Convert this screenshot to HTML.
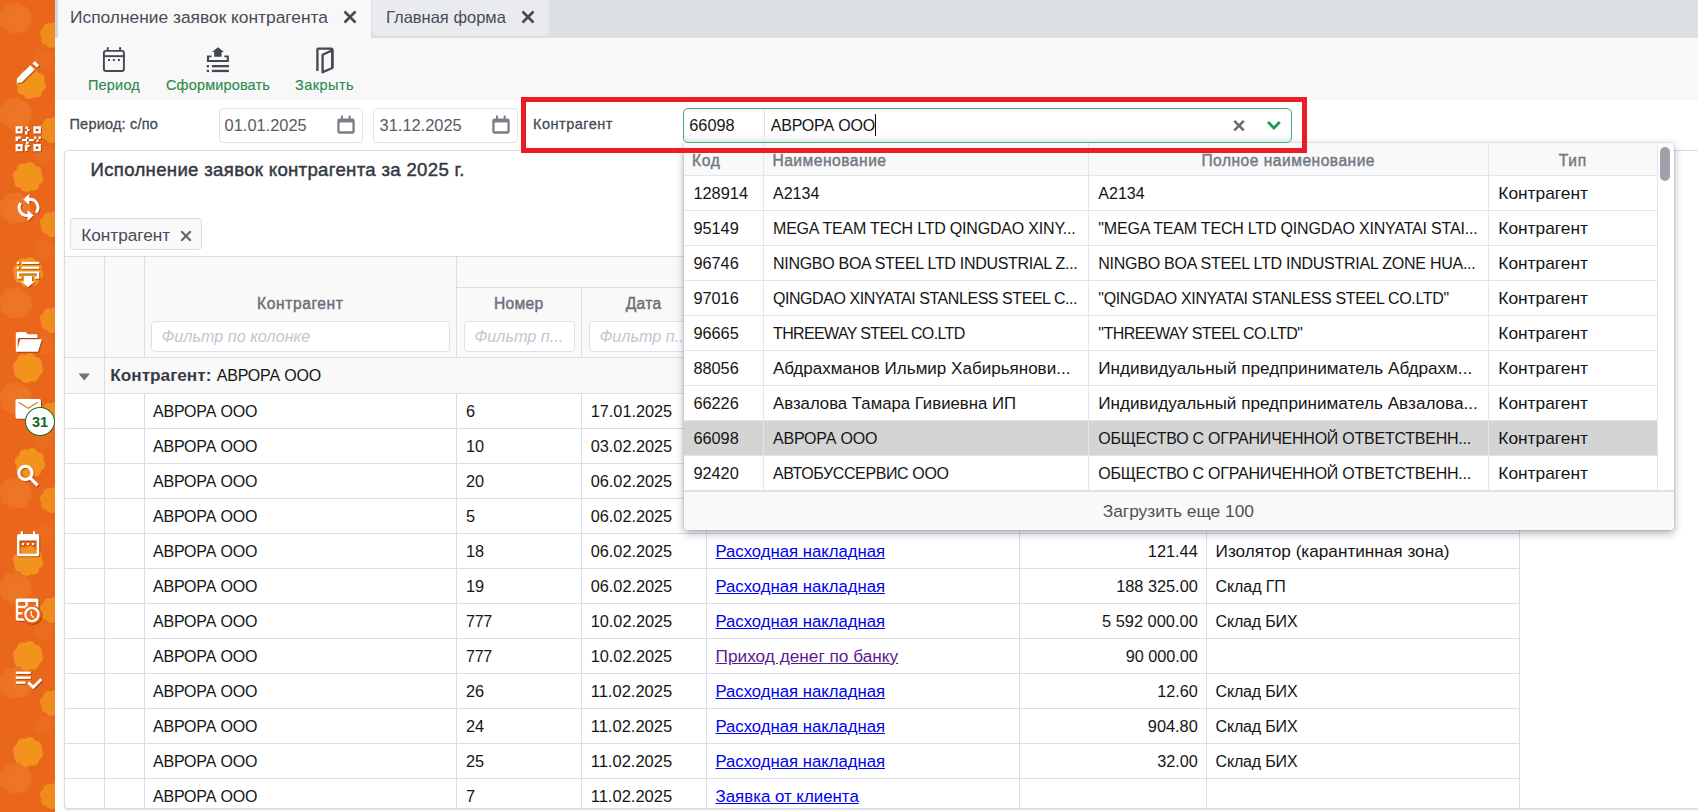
<!DOCTYPE html>
<html><head><meta charset="utf-8">
<style>
*{box-sizing:border-box;margin:0;padding:0}
html,body{width:1698px;height:812px;overflow:hidden;background:#fff;font-family:"Liberation Sans",sans-serif;color:#1b1b1b}
.r{position:absolute}
.t{position:absolute;white-space:nowrap}
.ic{position:absolute;overflow:visible}
a{color:inherit}
</style></head><body>

<svg class="ic" style="left:0;top:0;overflow:hidden" width="55" height="812" viewBox="0 0 55 812"><rect width="55" height="812" fill="#e9661b"/><g fill="#ee7728" opacity="0.75"><circle cx="24.7" cy="-75.0" r="6.4"/><circle cx="20.5" cy="-68.7" r="6.4"/><circle cx="13.0" cy="-67.3" r="6.4"/><circle cx="6.7" cy="-71.5" r="6.4"/><circle cx="5.3" cy="-79.0" r="6.4"/><circle cx="9.5" cy="-85.3" r="6.4"/><circle cx="17.0" cy="-86.7" r="6.4"/><circle cx="23.3" cy="-82.5" r="6.4"/><circle cx="15" cy="-77" r="9.9"/></g><g fill="#ee7526" opacity="0.6"><circle cx="27.9" cy="21.6" r="5.2"/><circle cx="24.5" cy="26.7" r="5.2"/><circle cx="18.4" cy="27.9" r="5.2"/><circle cx="13.3" cy="24.5" r="5.2"/><circle cx="12.1" cy="18.4" r="5.2"/><circle cx="15.5" cy="13.3" r="5.2"/><circle cx="21.6" cy="12.1" r="5.2"/><circle cx="26.7" cy="15.5" r="5.2"/><circle cx="20" cy="20" r="8.1"/></g><g fill="#ed7022" opacity="0.6"><circle cx="50.1" cy="61.2" r="4.0"/><circle cx="47.4" cy="65.2" r="4.0"/><circle cx="42.8" cy="66.1" r="4.0"/><circle cx="38.8" cy="63.4" r="4.0"/><circle cx="37.9" cy="58.8" r="4.0"/><circle cx="40.6" cy="54.8" r="4.0"/><circle cx="45.2" cy="53.9" r="4.0"/><circle cx="49.2" cy="56.6" r="4.0"/><circle cx="44" cy="60" r="6.2"/></g><g fill="#ee7728" opacity="0.75"><circle cx="24.7" cy="20.0" r="6.4"/><circle cx="20.5" cy="26.3" r="6.4"/><circle cx="13.0" cy="27.7" r="6.4"/><circle cx="6.7" cy="23.5" r="6.4"/><circle cx="5.3" cy="16.0" r="6.4"/><circle cx="9.5" cy="9.7" r="6.4"/><circle cx="17.0" cy="8.3" r="6.4"/><circle cx="23.3" cy="12.5" r="6.4"/><circle cx="15" cy="18" r="9.9"/></g><g fill="#ee7526" opacity="0.6"><circle cx="27.9" cy="116.6" r="5.2"/><circle cx="24.5" cy="121.7" r="5.2"/><circle cx="18.4" cy="122.9" r="5.2"/><circle cx="13.3" cy="119.5" r="5.2"/><circle cx="12.1" cy="113.4" r="5.2"/><circle cx="15.5" cy="108.3" r="5.2"/><circle cx="21.6" cy="107.1" r="5.2"/><circle cx="26.7" cy="110.5" r="5.2"/><circle cx="20" cy="115" r="8.1"/></g><g fill="#ed7022" opacity="0.6"><circle cx="50.1" cy="156.2" r="4.0"/><circle cx="47.4" cy="160.2" r="4.0"/><circle cx="42.8" cy="161.1" r="4.0"/><circle cx="38.8" cy="158.4" r="4.0"/><circle cx="37.9" cy="153.8" r="4.0"/><circle cx="40.6" cy="149.8" r="4.0"/><circle cx="45.2" cy="148.9" r="4.0"/><circle cx="49.2" cy="151.6" r="4.0"/><circle cx="44" cy="155" r="6.2"/></g><g fill="#ee7728" opacity="0.75"><circle cx="24.7" cy="115.0" r="6.4"/><circle cx="20.5" cy="121.3" r="6.4"/><circle cx="13.0" cy="122.7" r="6.4"/><circle cx="6.7" cy="118.5" r="6.4"/><circle cx="5.3" cy="111.0" r="6.4"/><circle cx="9.5" cy="104.7" r="6.4"/><circle cx="17.0" cy="103.3" r="6.4"/><circle cx="23.3" cy="107.5" r="6.4"/><circle cx="15" cy="113" r="9.9"/></g><g fill="#ee7526" opacity="0.6"><circle cx="27.9" cy="211.6" r="5.2"/><circle cx="24.5" cy="216.7" r="5.2"/><circle cx="18.4" cy="217.9" r="5.2"/><circle cx="13.3" cy="214.5" r="5.2"/><circle cx="12.1" cy="208.4" r="5.2"/><circle cx="15.5" cy="203.3" r="5.2"/><circle cx="21.6" cy="202.1" r="5.2"/><circle cx="26.7" cy="205.5" r="5.2"/><circle cx="20" cy="210" r="8.1"/></g><g fill="#ed7022" opacity="0.6"><circle cx="50.1" cy="251.2" r="4.0"/><circle cx="47.4" cy="255.2" r="4.0"/><circle cx="42.8" cy="256.1" r="4.0"/><circle cx="38.8" cy="253.4" r="4.0"/><circle cx="37.9" cy="248.8" r="4.0"/><circle cx="40.6" cy="244.8" r="4.0"/><circle cx="45.2" cy="243.9" r="4.0"/><circle cx="49.2" cy="246.6" r="4.0"/><circle cx="44" cy="250" r="6.2"/></g><g fill="#ee7728" opacity="0.75"><circle cx="24.7" cy="210.0" r="6.4"/><circle cx="20.5" cy="216.3" r="6.4"/><circle cx="13.0" cy="217.7" r="6.4"/><circle cx="6.7" cy="213.5" r="6.4"/><circle cx="5.3" cy="206.0" r="6.4"/><circle cx="9.5" cy="199.7" r="6.4"/><circle cx="17.0" cy="198.3" r="6.4"/><circle cx="23.3" cy="202.5" r="6.4"/><circle cx="15" cy="208" r="9.9"/></g><g fill="#ee7526" opacity="0.6"><circle cx="27.9" cy="306.6" r="5.2"/><circle cx="24.5" cy="311.7" r="5.2"/><circle cx="18.4" cy="312.9" r="5.2"/><circle cx="13.3" cy="309.5" r="5.2"/><circle cx="12.1" cy="303.4" r="5.2"/><circle cx="15.5" cy="298.3" r="5.2"/><circle cx="21.6" cy="297.1" r="5.2"/><circle cx="26.7" cy="300.5" r="5.2"/><circle cx="20" cy="305" r="8.1"/></g><g fill="#ed7022" opacity="0.6"><circle cx="50.1" cy="346.2" r="4.0"/><circle cx="47.4" cy="350.2" r="4.0"/><circle cx="42.8" cy="351.1" r="4.0"/><circle cx="38.8" cy="348.4" r="4.0"/><circle cx="37.9" cy="343.8" r="4.0"/><circle cx="40.6" cy="339.8" r="4.0"/><circle cx="45.2" cy="338.9" r="4.0"/><circle cx="49.2" cy="341.6" r="4.0"/><circle cx="44" cy="345" r="6.2"/></g><g fill="#ee7728" opacity="0.75"><circle cx="24.7" cy="305.0" r="6.4"/><circle cx="20.5" cy="311.3" r="6.4"/><circle cx="13.0" cy="312.7" r="6.4"/><circle cx="6.7" cy="308.5" r="6.4"/><circle cx="5.3" cy="301.0" r="6.4"/><circle cx="9.5" cy="294.7" r="6.4"/><circle cx="17.0" cy="293.3" r="6.4"/><circle cx="23.3" cy="297.5" r="6.4"/><circle cx="15" cy="303" r="9.9"/></g><g fill="#ee7526" opacity="0.6"><circle cx="27.9" cy="401.6" r="5.2"/><circle cx="24.5" cy="406.7" r="5.2"/><circle cx="18.4" cy="407.9" r="5.2"/><circle cx="13.3" cy="404.5" r="5.2"/><circle cx="12.1" cy="398.4" r="5.2"/><circle cx="15.5" cy="393.3" r="5.2"/><circle cx="21.6" cy="392.1" r="5.2"/><circle cx="26.7" cy="395.5" r="5.2"/><circle cx="20" cy="400" r="8.1"/></g><g fill="#ed7022" opacity="0.6"><circle cx="50.1" cy="441.2" r="4.0"/><circle cx="47.4" cy="445.2" r="4.0"/><circle cx="42.8" cy="446.1" r="4.0"/><circle cx="38.8" cy="443.4" r="4.0"/><circle cx="37.9" cy="438.8" r="4.0"/><circle cx="40.6" cy="434.8" r="4.0"/><circle cx="45.2" cy="433.9" r="4.0"/><circle cx="49.2" cy="436.6" r="4.0"/><circle cx="44" cy="440" r="6.2"/></g><g fill="#ee7728" opacity="0.75"><circle cx="24.7" cy="400.0" r="6.4"/><circle cx="20.5" cy="406.3" r="6.4"/><circle cx="13.0" cy="407.7" r="6.4"/><circle cx="6.7" cy="403.5" r="6.4"/><circle cx="5.3" cy="396.0" r="6.4"/><circle cx="9.5" cy="389.7" r="6.4"/><circle cx="17.0" cy="388.3" r="6.4"/><circle cx="23.3" cy="392.5" r="6.4"/><circle cx="15" cy="398" r="9.9"/></g><g fill="#ee7526" opacity="0.6"><circle cx="27.9" cy="496.6" r="5.2"/><circle cx="24.5" cy="501.7" r="5.2"/><circle cx="18.4" cy="502.9" r="5.2"/><circle cx="13.3" cy="499.5" r="5.2"/><circle cx="12.1" cy="493.4" r="5.2"/><circle cx="15.5" cy="488.3" r="5.2"/><circle cx="21.6" cy="487.1" r="5.2"/><circle cx="26.7" cy="490.5" r="5.2"/><circle cx="20" cy="495" r="8.1"/></g><g fill="#ed7022" opacity="0.6"><circle cx="50.1" cy="536.2" r="4.0"/><circle cx="47.4" cy="540.2" r="4.0"/><circle cx="42.8" cy="541.1" r="4.0"/><circle cx="38.8" cy="538.4" r="4.0"/><circle cx="37.9" cy="533.8" r="4.0"/><circle cx="40.6" cy="529.8" r="4.0"/><circle cx="45.2" cy="528.9" r="4.0"/><circle cx="49.2" cy="531.6" r="4.0"/><circle cx="44" cy="535" r="6.2"/></g><g fill="#ee7728" opacity="0.75"><circle cx="24.7" cy="495.0" r="6.4"/><circle cx="20.5" cy="501.3" r="6.4"/><circle cx="13.0" cy="502.7" r="6.4"/><circle cx="6.7" cy="498.5" r="6.4"/><circle cx="5.3" cy="491.0" r="6.4"/><circle cx="9.5" cy="484.7" r="6.4"/><circle cx="17.0" cy="483.3" r="6.4"/><circle cx="23.3" cy="487.5" r="6.4"/><circle cx="15" cy="493" r="9.9"/></g><g fill="#ee7526" opacity="0.6"><circle cx="27.9" cy="591.6" r="5.2"/><circle cx="24.5" cy="596.7" r="5.2"/><circle cx="18.4" cy="597.9" r="5.2"/><circle cx="13.3" cy="594.5" r="5.2"/><circle cx="12.1" cy="588.4" r="5.2"/><circle cx="15.5" cy="583.3" r="5.2"/><circle cx="21.6" cy="582.1" r="5.2"/><circle cx="26.7" cy="585.5" r="5.2"/><circle cx="20" cy="590" r="8.1"/></g><g fill="#ed7022" opacity="0.6"><circle cx="50.1" cy="631.2" r="4.0"/><circle cx="47.4" cy="635.2" r="4.0"/><circle cx="42.8" cy="636.1" r="4.0"/><circle cx="38.8" cy="633.4" r="4.0"/><circle cx="37.9" cy="628.8" r="4.0"/><circle cx="40.6" cy="624.8" r="4.0"/><circle cx="45.2" cy="623.9" r="4.0"/><circle cx="49.2" cy="626.6" r="4.0"/><circle cx="44" cy="630" r="6.2"/></g><g fill="#ee7728" opacity="0.75"><circle cx="24.7" cy="590.0" r="6.4"/><circle cx="20.5" cy="596.3" r="6.4"/><circle cx="13.0" cy="597.7" r="6.4"/><circle cx="6.7" cy="593.5" r="6.4"/><circle cx="5.3" cy="586.0" r="6.4"/><circle cx="9.5" cy="579.7" r="6.4"/><circle cx="17.0" cy="578.3" r="6.4"/><circle cx="23.3" cy="582.5" r="6.4"/><circle cx="15" cy="588" r="9.9"/></g><g fill="#ee7526" opacity="0.6"><circle cx="27.9" cy="686.6" r="5.2"/><circle cx="24.5" cy="691.7" r="5.2"/><circle cx="18.4" cy="692.9" r="5.2"/><circle cx="13.3" cy="689.5" r="5.2"/><circle cx="12.1" cy="683.4" r="5.2"/><circle cx="15.5" cy="678.3" r="5.2"/><circle cx="21.6" cy="677.1" r="5.2"/><circle cx="26.7" cy="680.5" r="5.2"/><circle cx="20" cy="685" r="8.1"/></g><g fill="#ed7022" opacity="0.6"><circle cx="50.1" cy="726.2" r="4.0"/><circle cx="47.4" cy="730.2" r="4.0"/><circle cx="42.8" cy="731.1" r="4.0"/><circle cx="38.8" cy="728.4" r="4.0"/><circle cx="37.9" cy="723.8" r="4.0"/><circle cx="40.6" cy="719.8" r="4.0"/><circle cx="45.2" cy="718.9" r="4.0"/><circle cx="49.2" cy="721.6" r="4.0"/><circle cx="44" cy="725" r="6.2"/></g><g fill="#ee7728" opacity="0.75"><circle cx="24.7" cy="685.0" r="6.4"/><circle cx="20.5" cy="691.3" r="6.4"/><circle cx="13.0" cy="692.7" r="6.4"/><circle cx="6.7" cy="688.5" r="6.4"/><circle cx="5.3" cy="681.0" r="6.4"/><circle cx="9.5" cy="674.7" r="6.4"/><circle cx="17.0" cy="673.3" r="6.4"/><circle cx="23.3" cy="677.5" r="6.4"/><circle cx="15" cy="683" r="9.9"/></g><g fill="#ee7526" opacity="0.6"><circle cx="27.9" cy="781.6" r="5.2"/><circle cx="24.5" cy="786.7" r="5.2"/><circle cx="18.4" cy="787.9" r="5.2"/><circle cx="13.3" cy="784.5" r="5.2"/><circle cx="12.1" cy="778.4" r="5.2"/><circle cx="15.5" cy="773.3" r="5.2"/><circle cx="21.6" cy="772.1" r="5.2"/><circle cx="26.7" cy="775.5" r="5.2"/><circle cx="20" cy="780" r="8.1"/></g><g fill="#ed7022" opacity="0.6"><circle cx="50.1" cy="821.2" r="4.0"/><circle cx="47.4" cy="825.2" r="4.0"/><circle cx="42.8" cy="826.1" r="4.0"/><circle cx="38.8" cy="823.4" r="4.0"/><circle cx="37.9" cy="818.8" r="4.0"/><circle cx="40.6" cy="814.8" r="4.0"/><circle cx="45.2" cy="813.9" r="4.0"/><circle cx="49.2" cy="816.6" r="4.0"/><circle cx="44" cy="820" r="6.2"/></g><g fill="#ee7728" opacity="0.75"><circle cx="24.7" cy="780.0" r="6.4"/><circle cx="20.5" cy="786.3" r="6.4"/><circle cx="13.0" cy="787.7" r="6.4"/><circle cx="6.7" cy="783.5" r="6.4"/><circle cx="5.3" cy="776.0" r="6.4"/><circle cx="9.5" cy="769.7" r="6.4"/><circle cx="17.0" cy="768.3" r="6.4"/><circle cx="23.3" cy="772.5" r="6.4"/><circle cx="15" cy="778" r="9.9"/></g><g fill="#ee7526" opacity="0.6"><circle cx="27.9" cy="876.6" r="5.2"/><circle cx="24.5" cy="881.7" r="5.2"/><circle cx="18.4" cy="882.9" r="5.2"/><circle cx="13.3" cy="879.5" r="5.2"/><circle cx="12.1" cy="873.4" r="5.2"/><circle cx="15.5" cy="868.3" r="5.2"/><circle cx="21.6" cy="867.1" r="5.2"/><circle cx="26.7" cy="870.5" r="5.2"/><circle cx="20" cy="875" r="8.1"/></g><g fill="#ed7022" opacity="0.6"><circle cx="50.1" cy="916.2" r="4.0"/><circle cx="47.4" cy="920.2" r="4.0"/><circle cx="42.8" cy="921.1" r="4.0"/><circle cx="38.8" cy="918.4" r="4.0"/><circle cx="37.9" cy="913.8" r="4.0"/><circle cx="40.6" cy="909.8" r="4.0"/><circle cx="45.2" cy="908.9" r="4.0"/><circle cx="49.2" cy="911.6" r="4.0"/><circle cx="44" cy="915" r="6.2"/></g><g fill="#ee7728" opacity="0.75"><circle cx="24.7" cy="875.0" r="6.4"/><circle cx="20.5" cy="881.3" r="6.4"/><circle cx="13.0" cy="882.7" r="6.4"/><circle cx="6.7" cy="878.5" r="6.4"/><circle cx="5.3" cy="871.0" r="6.4"/><circle cx="9.5" cy="864.7" r="6.4"/><circle cx="17.0" cy="863.3" r="6.4"/><circle cx="23.3" cy="867.5" r="6.4"/><circle cx="15" cy="873" r="9.9"/></g><g fill="#ee7526" opacity="0.6"><circle cx="27.9" cy="971.6" r="5.2"/><circle cx="24.5" cy="976.7" r="5.2"/><circle cx="18.4" cy="977.9" r="5.2"/><circle cx="13.3" cy="974.5" r="5.2"/><circle cx="12.1" cy="968.4" r="5.2"/><circle cx="15.5" cy="963.3" r="5.2"/><circle cx="21.6" cy="962.1" r="5.2"/><circle cx="26.7" cy="965.5" r="5.2"/><circle cx="20" cy="970" r="8.1"/></g><g fill="#ed7022" opacity="0.6"><circle cx="50.1" cy="1011.2" r="4.0"/><circle cx="47.4" cy="1015.2" r="4.0"/><circle cx="42.8" cy="1016.1" r="4.0"/><circle cx="38.8" cy="1013.4" r="4.0"/><circle cx="37.9" cy="1008.8" r="4.0"/><circle cx="40.6" cy="1004.8" r="4.0"/><circle cx="45.2" cy="1003.9" r="4.0"/><circle cx="49.2" cy="1006.6" r="4.0"/><circle cx="44" cy="1010" r="6.2"/></g><g fill="#f3961f" opacity="0.95"><circle cx="40.1" cy="85.8" r="6.0"/><circle cx="36.1" cy="91.8" r="6.0"/><circle cx="29.2" cy="93.1" r="6.0"/><circle cx="23.2" cy="89.1" r="6.0"/><circle cx="21.9" cy="82.2" r="6.0"/><circle cx="25.9" cy="76.2" r="6.0"/><circle cx="32.8" cy="74.9" r="6.0"/><circle cx="38.8" cy="78.9" r="6.0"/><circle cx="31" cy="84" r="9.3"/></g><g fill="#f3961f" opacity="0.95"><circle cx="37.1" cy="178.8" r="6.0"/><circle cx="33.1" cy="184.8" r="6.0"/><circle cx="26.2" cy="186.1" r="6.0"/><circle cx="20.2" cy="182.1" r="6.0"/><circle cx="18.9" cy="175.2" r="6.0"/><circle cx="22.9" cy="169.2" r="6.0"/><circle cx="29.8" cy="167.9" r="6.0"/><circle cx="35.8" cy="171.9" r="6.0"/><circle cx="28" cy="177" r="9.3"/></g><g fill="#f3961f" opacity="0.95"><circle cx="37.1" cy="273.8" r="6.0"/><circle cx="33.1" cy="279.8" r="6.0"/><circle cx="26.2" cy="281.1" r="6.0"/><circle cx="20.2" cy="277.1" r="6.0"/><circle cx="18.9" cy="270.2" r="6.0"/><circle cx="22.9" cy="264.2" r="6.0"/><circle cx="29.8" cy="262.9" r="6.0"/><circle cx="35.8" cy="266.9" r="6.0"/><circle cx="28" cy="272" r="9.3"/></g><g fill="#f3961f" opacity="0.95"><circle cx="37.1" cy="369.8" r="6.0"/><circle cx="33.1" cy="375.8" r="6.0"/><circle cx="26.2" cy="377.1" r="6.0"/><circle cx="20.2" cy="373.1" r="6.0"/><circle cx="18.9" cy="366.2" r="6.0"/><circle cx="22.9" cy="360.2" r="6.0"/><circle cx="29.8" cy="358.9" r="6.0"/><circle cx="35.8" cy="362.9" r="6.0"/><circle cx="28" cy="368" r="9.3"/></g><g fill="#f3961f" opacity="0.95"><circle cx="39.1" cy="464.8" r="6.0"/><circle cx="35.1" cy="470.8" r="6.0"/><circle cx="28.2" cy="472.1" r="6.0"/><circle cx="22.2" cy="468.1" r="6.0"/><circle cx="20.9" cy="461.2" r="6.0"/><circle cx="24.9" cy="455.2" r="6.0"/><circle cx="31.8" cy="453.9" r="6.0"/><circle cx="37.8" cy="457.9" r="6.0"/><circle cx="30" cy="463" r="9.3"/></g><g fill="#f3961f" opacity="0.95"><circle cx="37.1" cy="562.8" r="6.0"/><circle cx="33.1" cy="568.8" r="6.0"/><circle cx="26.2" cy="570.1" r="6.0"/><circle cx="20.2" cy="566.1" r="6.0"/><circle cx="18.9" cy="559.2" r="6.0"/><circle cx="22.9" cy="553.2" r="6.0"/><circle cx="29.8" cy="551.9" r="6.0"/><circle cx="35.8" cy="555.9" r="6.0"/><circle cx="28" cy="561" r="9.3"/></g><g fill="#f3961f" opacity="0.95"><circle cx="37.1" cy="657.8" r="6.0"/><circle cx="33.1" cy="663.8" r="6.0"/><circle cx="26.2" cy="665.1" r="6.0"/><circle cx="20.2" cy="661.1" r="6.0"/><circle cx="18.9" cy="654.2" r="6.0"/><circle cx="22.9" cy="648.2" r="6.0"/><circle cx="29.8" cy="646.9" r="6.0"/><circle cx="35.8" cy="650.9" r="6.0"/><circle cx="28" cy="656" r="9.3"/></g><g fill="#f3961f" opacity="0.95"><circle cx="37.1" cy="753.8" r="6.0"/><circle cx="33.1" cy="759.8" r="6.0"/><circle cx="26.2" cy="761.1" r="6.0"/><circle cx="20.2" cy="757.1" r="6.0"/><circle cx="18.9" cy="750.2" r="6.0"/><circle cx="22.9" cy="744.2" r="6.0"/><circle cx="29.8" cy="742.9" r="6.0"/><circle cx="35.8" cy="746.9" r="6.0"/><circle cx="28" cy="752" r="9.3"/></g><g fill="#f2901f" opacity="0.9"><circle cx="60.9" cy="36.6" r="5.2"/><circle cx="57.5" cy="41.7" r="5.2"/><circle cx="51.4" cy="42.9" r="5.2"/><circle cx="46.3" cy="39.5" r="5.2"/><circle cx="45.1" cy="33.4" r="5.2"/><circle cx="48.5" cy="28.3" r="5.2"/><circle cx="54.6" cy="27.1" r="5.2"/><circle cx="59.7" cy="30.5" r="5.2"/><circle cx="53" cy="35" r="8.1"/></g><g fill="#f2901f" opacity="0.9"><circle cx="60.9" cy="131.6" r="5.2"/><circle cx="57.5" cy="136.7" r="5.2"/><circle cx="51.4" cy="137.9" r="5.2"/><circle cx="46.3" cy="134.5" r="5.2"/><circle cx="45.1" cy="128.4" r="5.2"/><circle cx="48.5" cy="123.3" r="5.2"/><circle cx="54.6" cy="122.1" r="5.2"/><circle cx="59.7" cy="125.5" r="5.2"/><circle cx="53" cy="130" r="8.1"/></g><g fill="#f2901f" opacity="0.9"><circle cx="60.9" cy="225.6" r="5.2"/><circle cx="57.5" cy="230.7" r="5.2"/><circle cx="51.4" cy="231.9" r="5.2"/><circle cx="46.3" cy="228.5" r="5.2"/><circle cx="45.1" cy="222.4" r="5.2"/><circle cx="48.5" cy="217.3" r="5.2"/><circle cx="54.6" cy="216.1" r="5.2"/><circle cx="59.7" cy="219.5" r="5.2"/><circle cx="53" cy="224" r="8.1"/></g><g fill="#f2901f" opacity="0.9"><circle cx="60.9" cy="321.6" r="5.2"/><circle cx="57.5" cy="326.7" r="5.2"/><circle cx="51.4" cy="327.9" r="5.2"/><circle cx="46.3" cy="324.5" r="5.2"/><circle cx="45.1" cy="318.4" r="5.2"/><circle cx="48.5" cy="313.3" r="5.2"/><circle cx="54.6" cy="312.1" r="5.2"/><circle cx="59.7" cy="315.5" r="5.2"/><circle cx="53" cy="320" r="8.1"/></g><g fill="#f2901f" opacity="0.9"><circle cx="60.9" cy="416.6" r="5.2"/><circle cx="57.5" cy="421.7" r="5.2"/><circle cx="51.4" cy="422.9" r="5.2"/><circle cx="46.3" cy="419.5" r="5.2"/><circle cx="45.1" cy="413.4" r="5.2"/><circle cx="48.5" cy="408.3" r="5.2"/><circle cx="54.6" cy="407.1" r="5.2"/><circle cx="59.7" cy="410.5" r="5.2"/><circle cx="53" cy="415" r="8.1"/></g><g fill="#f2901f" opacity="0.9"><circle cx="60.9" cy="501.6" r="5.2"/><circle cx="57.5" cy="506.7" r="5.2"/><circle cx="51.4" cy="507.9" r="5.2"/><circle cx="46.3" cy="504.5" r="5.2"/><circle cx="45.1" cy="498.4" r="5.2"/><circle cx="48.5" cy="493.3" r="5.2"/><circle cx="54.6" cy="492.1" r="5.2"/><circle cx="59.7" cy="495.5" r="5.2"/><circle cx="53" cy="500" r="8.1"/></g><g fill="#f2901f" opacity="0.9"><circle cx="60.9" cy="611.6" r="5.2"/><circle cx="57.5" cy="616.7" r="5.2"/><circle cx="51.4" cy="617.9" r="5.2"/><circle cx="46.3" cy="614.5" r="5.2"/><circle cx="45.1" cy="608.4" r="5.2"/><circle cx="48.5" cy="603.3" r="5.2"/><circle cx="54.6" cy="602.1" r="5.2"/><circle cx="59.7" cy="605.5" r="5.2"/><circle cx="53" cy="610" r="8.1"/></g><g fill="#f2901f" opacity="0.9"><circle cx="60.9" cy="704.6" r="5.2"/><circle cx="57.5" cy="709.7" r="5.2"/><circle cx="51.4" cy="710.9" r="5.2"/><circle cx="46.3" cy="707.5" r="5.2"/><circle cx="45.1" cy="701.4" r="5.2"/><circle cx="48.5" cy="696.3" r="5.2"/><circle cx="54.6" cy="695.1" r="5.2"/><circle cx="59.7" cy="698.5" r="5.2"/><circle cx="53" cy="703" r="8.1"/></g><g fill="#f2901f" opacity="0.9"><circle cx="60.9" cy="797.6" r="5.2"/><circle cx="57.5" cy="802.7" r="5.2"/><circle cx="51.4" cy="803.9" r="5.2"/><circle cx="46.3" cy="800.5" r="5.2"/><circle cx="45.1" cy="794.4" r="5.2"/><circle cx="48.5" cy="789.3" r="5.2"/><circle cx="54.6" cy="788.1" r="5.2"/><circle cx="59.7" cy="791.5" r="5.2"/><circle cx="53" cy="796" r="8.1"/></g></svg>
<svg class="ic" style="left:0;top:0;filter:drop-shadow(1px 1px 0.5px rgba(120,40,0,.55))" width="55" height="812" viewBox="0 0 55 812"><polygon points="17,78.6 30.4,65.2 34.8,69.4 21.4,82.8 17,82.8" fill="#fff"/><polygon points="32.4,63.4 34.8,61 39.2,65.2 36.9,67.6" fill="#fff"/><g fill="#fff"><path d="M15.6 126.2h7v7.3h-7z M17.9 128.7v2.5h2.5v-2.5z" fill-rule="evenodd"/><path d="M33.4 126.2h7.5v7.3h-7.5z M35.9 128.7v2.5h2.5v-2.5z" fill-rule="evenodd"/><path d="M15.6 144h7v7.3h-7z M17.9 146.5v2.5h2.5v-2.5z" fill-rule="evenodd"/><path d="M33.4 144h7.5v7.3h-7.5z M35.9 146.5v2.5h2.5v-2.5z" fill-rule="evenodd"/><rect x="25.5" y="126.5" width="2.5" height="2.5"/><rect x="27" y="129" width="2.5" height="2"/><rect x="25" y="131" width="2.5" height="3.5"/><rect x="15.6" y="136.5" width="2.5" height="4.5"/><rect x="18" y="136.5" width="3" height="2.2"/><rect x="22" y="139" width="5" height="2.2"/><rect x="26" y="137" width="2.5" height="2"/><rect x="29" y="139" width="5" height="2.2"/><rect x="34" y="136.5" width="2.4" height="2.4"/><rect x="38.5" y="136.5" width="2.4" height="2.4"/><rect x="36.5" y="139.5" width="2.2" height="2.2"/><rect x="26" y="141.5" width="2.5" height="3"/><rect x="25" y="145" width="2.5" height="6"/><rect x="27.5" y="145" width="2" height="2"/></g><g fill="none" stroke="#fff" stroke-width="3"><path d="M20.6 203 A8 8 0 0 0 28.2 215.5"/><path d="M36 212.5 A8 8 0 0 0 28.2 199.5"/></g><polygon points="23.3,199.5 29.3,194 29.3,205" fill="#fff"/><polygon points="33.6,215.5 27.6,210 27.6,221" fill="#fff"/><g fill="#fff"><rect x="16.8" y="261.8" width="2.2" height="2.2"/><rect x="21.8" y="261.8" width="17.4" height="2.2"/><rect x="16.8" y="266.6" width="2.2" height="2.2"/><rect x="21.8" y="266.6" width="17.4" height="2.2"/><path d="M17 271.4h22.2v7.4h-4.4v-2.2h2.2v-3h-17.8v3h2.2v2.2h-4.4z"/><polygon points="24.1,276 32.1,276 32.1,281.5 35,281.5 28.1,287 21.2,281.5 24.1,281.5"/></g><path d="M15.8 333.5 q0 -1.6 1.6 -1.6 h8 l2.6 2.3 h8.2 q1.3 0 1.3 1.3 v2.5 h-18.5 l-1.2 1 v12.8 h-0.4 q-1.6 0 -1.6 -1.6z" fill="#fff"/><polygon points="20.4,339.2 41.9,339.2 38,351.8 16.6,351.8" fill="#fff"/><circle cx="25.4" cy="473" r="6.6" fill="none" stroke="#fff" stroke-width="3.2"/><line x1="30.5" y1="478.2" x2="37.6" y2="485.3" stroke="#fff" stroke-width="3.2" stroke-linecap="butt"/><path d="M17 536.1 q0 -2 2 -2 h18.2 q2 0 2 2 v18.2 q0 2 -2 2 h-18.2 q-2 0 -2 -2z M19.5 540.4 v13.4 h17.2 v-13.4z" fill="#fff" fill-rule="evenodd"/><rect x="20.8" y="531.3" width="2.1" height="3.5" fill="#fff"/><rect x="33" y="531.3" width="2.1" height="3.5" fill="#fff"/><rect x="22" y="543" width="2.1" height="2.1" fill="#fff"/><rect x="27" y="543" width="2.1" height="2.1" fill="#fff"/><rect x="32" y="543" width="2.1" height="2.1" fill="#fff"/><rect x="15.8" y="598.6" width="22.6" height="22.2" rx="2" fill="#fff"/><g fill="#e9661b"><rect x="18.1" y="602" width="7.3" height="3.7"/><rect x="27.9" y="602" width="8" height="3.7"/><rect x="18.1" y="608.2" width="6" height="3.8"/><rect x="18.1" y="614.5" width="5" height="3.8"/><circle cx="31.9" cy="614.5" r="9.6"/></g><circle cx="31.9" cy="614.5" r="6.6" fill="#e9661b" stroke="#fff" stroke-width="2.3"/><path d="M31.2 611 v4.3 l2.8 2.4" fill="none" stroke="#fff" stroke-width="1.3"/><rect x="15.8" y="671.6" width="15" height="2.3" fill="#fff"/><rect x="15.8" y="676.5" width="15" height="2.4" fill="#fff"/><rect x="15.8" y="681.5" width="9.6" height="2.3" fill="#fff"/><polyline points="28.3,682.5 33.2,687.3 41.3,679.2" fill="none" stroke="#fff" stroke-width="2.8"/><rect x="15.5" y="398.9" width="25.5" height="19.9" rx="2" fill="#fff"/><polyline points="18.5,402.3 28.2,408.3 38,402.3" fill="none" stroke="#e0782f" stroke-width="1.3"/></svg>
<div class="r" style="left:25px;top:407px;width:30px;height:29px;border-radius:50%;border:1.6px solid #157024;background:#fff"></div>
<div class="t" style="left:25.00px;width:30px;text-align:center;top:415.00px;font-size:14.5px;line-height:14.5px;color:#0d6b22;font-weight:bold;">31</div>
<div class="r" style="left:55px;top:0px;width:1643px;height:38px;background:#dcdfe4;"></div>
<div class="r" style="left:55px;top:0px;width:3px;height:38px;background:#d2d8e1;"></div>
<div class="r" style="left:58px;top:0px;width:313px;height:38px;background:#f8f8f8;"></div>
<div class="r" style="left:372px;top:0px;width:177px;height:36px;background:#e9ebef;border-radius:0 0 5px 5px"></div>
<div class="t" style="left:70.00px;top:9.00px;font-size:17.36px;line-height:17.36px;color:#474b57;">Исполнение заявок контрагента</div>
<div class="t" style="left:386.00px;top:9.00px;font-size:16.5px;line-height:16.5px;color:#474b57;">Главная форма</div>
<svg class="ic" style="left:342.5px;top:10.3px" width="14" height="14" viewBox="0 0 14 14"><path d="M1.5 1.5L12.5 12.5M12.5 1.5L1.5 12.5" stroke="#474a55" stroke-width="2.6"/></svg>
<svg class="ic" style="left:521px;top:10.3px" width="14" height="14" viewBox="0 0 14 14"><path d="M1.5 1.5L12.5 12.5M12.5 1.5L1.5 12.5" stroke="#474a55" stroke-width="2.6"/></svg>
<div class="r" style="left:55px;top:38px;width:1643px;height:62px;background:#f8f8f8;"></div>
<div class="t" style="left:88.00px;top:78.00px;font-size:14.5px;line-height:14.5px;color:#2d8a4e;letter-spacing:0.189px;-webkit-text-stroke:0.15px currentColor;">Период</div>
<div class="t" style="left:166.00px;top:78.00px;font-size:14.5px;line-height:14.5px;color:#2d8a4e;letter-spacing:0.149px;-webkit-text-stroke:0.15px currentColor;">Сформировать</div>
<div class="t" style="left:295.00px;top:78.00px;font-size:14.5px;line-height:14.5px;color:#2d8a4e;letter-spacing:0.450px;-webkit-text-stroke:0.15px currentColor;">Закрыть</div>
<svg class="ic" style="left:98px;top:42px" width="34" height="34" viewBox="0 0 34 34"><rect x="5.9" y="8.9" width="20" height="20.1" rx="2" fill="none" stroke="#434752" stroke-width="1.9"/><rect x="5" y="13.2" width="21.8" height="1.9" fill="#434752"/><rect x="8.8" y="5.2" width="1.9" height="3.5" fill="#434752"/><rect x="21.1" y="5.2" width="2" height="3.5" fill="#434752"/><rect x="10" y="17" width="2" height="2" fill="#434752"/><rect x="14.9" y="17" width="2" height="2" fill="#434752"/><rect x="19.9" y="17" width="2" height="2" fill="#434752"/></svg>
<svg class="ic" style="left:200px;top:42px" width="34" height="34" viewBox="0 0 34 34"><polygon points="18,5.2 24,9.9 21.6,9.9 21.6,14.8 14.2,14.8 14.2,9.9 12,9.9" fill="#434752"/><path d="M6.9 13.4h4.6v1.9h-2.5v2.8h17.8v-2.8h-2.5v-1.9h4.6v6.7h-22z" fill="#434752"/><rect x="6.7" y="23" width="2.3" height="2.3" fill="#434752"/><rect x="11.9" y="23" width="17" height="2.3" fill="#434752"/><rect x="6.7" y="27.8" width="2.3" height="2.3" fill="#434752"/><rect x="11.9" y="27.8" width="17" height="2.3" fill="#434752"/></svg>
<svg class="ic" style="left:308px;top:42px" width="34" height="34" viewBox="0 0 34 34"><path d="M9.4 28.9 V7.6 q0 -0.9 0.9 -0.9 H23.5 q0.9 0 0.9 0.9 V26" fill="none" stroke="#434752" stroke-width="2.3"/><polygon points="14.6,12.8 24.3,8.3 24.3,26 14.6,30.2" fill="none" stroke="#434752" stroke-width="2.3" stroke-linejoin="round"/></svg>
<div class="t" style="left:69.50px;top:117.00px;font-size:14.5px;line-height:14.5px;color:#454a55;letter-spacing:0.199px;-webkit-text-stroke:0.3px currentColor;">Период: с/по</div>
<div class="r" style="left:219px;top:108px;width:144px;height:35px;background:#fff;border:1px solid #dfe1e8;border-radius:4px"></div>
<div class="t" style="left:224.60px;top:117.00px;font-size:16.4px;line-height:16.4px;color:#555b63;">01.01.2025</div>
<svg class="ic" style="left:337px;top:114.5px" width="19" height="20" viewBox="0 0 19 20"><path d="M0.3 5.7 q0 -2.2 2.2 -2.2 h13 q2.2 0 2.2 2.2 v10.8 q0 2.2 -2.2 2.2 h-13 q-2.2 0 -2.2 -2.2z M2.6 7.6 v8.7 h12.8 v-8.7z" fill="#7a7e86" fill-rule="evenodd"/><rect x="4" y="0.5" width="2" height="3.5" fill="#7a7e86"/><rect x="11.7" y="0.5" width="2" height="3.5" fill="#7a7e86"/></svg>
<div class="r" style="left:373px;top:108px;width:145px;height:35px;background:#fff;border:1px solid #dfe1e8;border-radius:4px"></div>
<div class="t" style="left:379.60px;top:117.00px;font-size:16.4px;line-height:16.4px;color:#555b63;">31.12.2025</div>
<svg class="ic" style="left:492px;top:114.5px" width="19" height="20" viewBox="0 0 19 20"><path d="M0.3 5.7 q0 -2.2 2.2 -2.2 h13 q2.2 0 2.2 2.2 v10.8 q0 2.2 -2.2 2.2 h-13 q-2.2 0 -2.2 -2.2z M2.6 7.6 v8.7 h12.8 v-8.7z" fill="#7a7e86" fill-rule="evenodd"/><rect x="4" y="0.5" width="2" height="3.5" fill="#7a7e86"/><rect x="11.7" y="0.5" width="2" height="3.5" fill="#7a7e86"/></svg>
<div class="t" style="left:533.00px;top:117.00px;font-size:14.5px;line-height:14.5px;color:#454a55;letter-spacing:0.502px;-webkit-text-stroke:0.3px currentColor;">Контрагент</div>
<div class="r" style="left:64px;top:150px;width:1660px;height:659px;background:#fff;border:1px solid #d9dbe7;border-radius:4px;box-shadow:0 1px 1.5px rgba(60,70,100,.18)"></div>
<div class="t" style="left:90.50px;top:161.00px;font-size:18.6px;line-height:18.6px;color:#333942;letter-spacing:0.316px;-webkit-text-stroke:0.45px currentColor;">Исполнение заявок контрагента за 2025 г.</div>
<div class="r" style="left:70px;top:218px;width:132px;height:32px;background:#fafafa;border:1px solid #d9dbe7;border-radius:4px"></div>
<div class="t" style="left:81.30px;top:227.00px;font-size:17.2px;line-height:17.2px;color:#474b57;">Контрагент</div>
<svg class="ic" style="left:179.5px;top:229.5px" width="12" height="12" viewBox="0 0 14 14"><path d="M1.5 1.5L12.5 12.5M12.5 1.5L1.5 12.5" stroke="#63666c" stroke-width="2.6"/></svg>
<div class="r" style="left:65px;top:257px;width:1454px;height:100px;background:#f9f9fa;"></div>
<div class="r" style="left:65px;top:358px;width:1454px;height:35px;background:#f9f9fa;"></div>
<div class="r" style="left:64px;top:256px;width:1456px;height:1px;background:#dcdde9;"></div>
<div class="r" style="left:456px;top:287px;width:1063px;height:1px;background:#dcdde9;"></div>
<div class="r" style="left:64px;top:357px;width:1456px;height:1px;background:#dcdde9;"></div>
<div class="r" style="left:64px;top:393px;width:1456px;height:1px;background:#dcdde9;"></div>
<div class="r" style="left:64px;top:428px;width:1456px;height:1px;background:#dcdde9;"></div>
<div class="r" style="left:64px;top:463px;width:1456px;height:1px;background:#dcdde9;"></div>
<div class="r" style="left:64px;top:498px;width:1456px;height:1px;background:#dcdde9;"></div>
<div class="r" style="left:64px;top:533px;width:1456px;height:1px;background:#dcdde9;"></div>
<div class="r" style="left:64px;top:568px;width:1456px;height:1px;background:#dcdde9;"></div>
<div class="r" style="left:64px;top:603px;width:1456px;height:1px;background:#dcdde9;"></div>
<div class="r" style="left:64px;top:638px;width:1456px;height:1px;background:#dcdde9;"></div>
<div class="r" style="left:64px;top:673px;width:1456px;height:1px;background:#dcdde9;"></div>
<div class="r" style="left:64px;top:708px;width:1456px;height:1px;background:#dcdde9;"></div>
<div class="r" style="left:64px;top:743px;width:1456px;height:1px;background:#dcdde9;"></div>
<div class="r" style="left:64px;top:778px;width:1456px;height:1px;background:#dcdde9;"></div>
<div class="r" style="left:64px;top:813px;width:1456px;height:1px;background:#dcdde9;"></div>
<div class="r" style="left:104px;top:256px;width:1px;height:552px;background:#dcdde9;"></div>
<div class="r" style="left:144px;top:256px;width:1px;height:101px;background:#dcdde9;"></div>
<div class="r" style="left:144px;top:393px;width:1px;height:416px;background:#dcdde9;"></div>
<div class="r" style="left:456px;top:256px;width:1px;height:101px;background:#dcdde9;"></div>
<div class="r" style="left:456px;top:393px;width:1px;height:416px;background:#dcdde9;"></div>
<div class="r" style="left:581px;top:287px;width:1px;height:70px;background:#dcdde9;"></div>
<div class="r" style="left:581px;top:393px;width:1px;height:416px;background:#dcdde9;"></div>
<div class="r" style="left:706px;top:287px;width:1px;height:70px;background:#dcdde9;"></div>
<div class="r" style="left:706px;top:393px;width:1px;height:416px;background:#dcdde9;"></div>
<div class="r" style="left:1019px;top:287px;width:1px;height:70px;background:#dcdde9;"></div>
<div class="r" style="left:1019px;top:393px;width:1px;height:416px;background:#dcdde9;"></div>
<div class="r" style="left:1206px;top:287px;width:1px;height:70px;background:#dcdde9;"></div>
<div class="r" style="left:1206px;top:393px;width:1px;height:416px;background:#dcdde9;"></div>
<div class="r" style="left:1519px;top:256px;width:1px;height:552px;background:#dcdde9;"></div>
<div class="t" style="left:144.29px;width:312px;text-align:center;top:296.00px;font-size:15.6px;line-height:15.6px;color:#6b7079;letter-spacing:0.573px;-webkit-text-stroke:0.45px currentColor;">Контрагент</div>
<div class="t" style="left:456.15px;width:125px;text-align:center;top:296.00px;font-size:15.6px;line-height:15.6px;color:#6b7079;letter-spacing:0.296px;-webkit-text-stroke:0.45px currentColor;">Номер</div>
<div class="t" style="left:581.18px;width:125px;text-align:center;top:296.00px;font-size:15.6px;line-height:15.6px;color:#6b7079;letter-spacing:0.362px;-webkit-text-stroke:0.45px currentColor;">Дата</div>
<div class="r" style="left:151px;top:321px;width:299px;height:31px;background:#fff;border:1px solid #dfe1e8;border-radius:4px;overflow:hidden"></div>
<div class="t" style="left:161.50px;top:328.00px;font-size:16.2px;line-height:16.2px;color:#c3c6cf;font-style:italic;">Фильтр по колонке</div>
<div class="r" style="left:464px;top:321px;width:111px;height:31px;background:#fff;border:1px solid #dfe1e8;border-radius:4px;overflow:hidden"></div>
<div class="t" style="left:474.50px;top:328.00px;font-size:16.2px;line-height:16.2px;color:#c3c6cf;font-style:italic;">Фильтр п...</div>
<div class="r" style="left:589px;top:321px;width:110px;height:31px;background:#fff;border:1px solid #dfe1e8;border-radius:4px;overflow:hidden"></div>
<div class="t" style="left:599.50px;top:328.00px;font-size:16.2px;line-height:16.2px;color:#c3c6cf;font-style:italic;">Фильтр п...</div>
<svg class="ic" style="left:78px;top:373px" width="13" height="8" viewBox="0 0 13 8"><polygon points="0.5,0.5 12,0.5 6.25,7.5" fill="#6f737b"/></svg>
<div class="t" style="left:110.30px;top:367.00px;font-size:17.2px;line-height:17.2px;color:#353b45;font-weight:bold;">Контрагент:</div>
<div class="t" style="left:216.70px;top:368.00px;font-size:16px;line-height:16px;color:#151515;letter-spacing:-0.187px;">АВРОРА ООО</div>
<div class="r" style="left:0;top:0;width:1698px;height:808px;overflow:hidden">
<div class="t" style="left:153.00px;top:404.00px;font-size:16px;line-height:16px;color:#151515;letter-spacing:-0.187px;">АВРОРА ООО</div>
<div class="t" style="left:466.00px;top:403.00px;font-size:16.32px;line-height:16.32px;color:#151515;">6</div>
<div class="t" style="left:590.70px;top:403.00px;font-size:16.3px;line-height:16.3px;color:#151515;">17.01.2025</div>
<div class="t" style="left:715.50px;top:404.00px;font-size:16.69px;line-height:16.69px;color:#0000ee;"><span style="text-decoration:underline">Расходная накладная</span></div>
<div class="t" style="left:1017.80px;width:180px;text-align:right;top:403.00px;font-size:16.12px;line-height:16.12px;color:#151515;">1 200.00</div>
<div class="t" style="left:1215.60px;top:404.00px;font-size:16px;line-height:16px;color:#151515;letter-spacing:-0.180px;">Склад БИХ</div>
<div class="t" style="left:153.00px;top:439.00px;font-size:16px;line-height:16px;color:#151515;letter-spacing:-0.187px;">АВРОРА ООО</div>
<div class="t" style="left:466.00px;top:438.00px;font-size:16.32px;line-height:16.32px;color:#151515;">10</div>
<div class="t" style="left:590.70px;top:438.00px;font-size:16.3px;line-height:16.3px;color:#151515;">03.02.2025</div>
<div class="t" style="left:715.50px;top:439.00px;font-size:16.69px;line-height:16.69px;color:#0000ee;"><span style="text-decoration:underline">Расходная накладная</span></div>
<div class="t" style="left:1017.80px;width:180px;text-align:right;top:438.00px;font-size:16.12px;line-height:16.12px;color:#151515;">3 400.00</div>
<div class="t" style="left:1215.60px;top:439.00px;font-size:16px;line-height:16px;color:#151515;letter-spacing:-0.180px;">Склад БИХ</div>
<div class="t" style="left:153.00px;top:474.00px;font-size:16px;line-height:16px;color:#151515;letter-spacing:-0.187px;">АВРОРА ООО</div>
<div class="t" style="left:466.00px;top:473.00px;font-size:16.32px;line-height:16.32px;color:#151515;">20</div>
<div class="t" style="left:590.70px;top:473.00px;font-size:16.3px;line-height:16.3px;color:#151515;">06.02.2025</div>
<div class="t" style="left:715.50px;top:474.00px;font-size:16.69px;line-height:16.69px;color:#0000ee;"><span style="text-decoration:underline">Расходная накладная</span></div>
<div class="t" style="left:1017.80px;width:180px;text-align:right;top:473.00px;font-size:16.27px;line-height:16.27px;color:#151515;">560.00</div>
<div class="t" style="left:1215.60px;top:474.00px;font-size:16px;line-height:16px;color:#151515;letter-spacing:-0.180px;">Склад БИХ</div>
<div class="t" style="left:153.00px;top:509.00px;font-size:16px;line-height:16px;color:#151515;letter-spacing:-0.187px;">АВРОРА ООО</div>
<div class="t" style="left:466.00px;top:508.00px;font-size:16.32px;line-height:16.32px;color:#151515;">5</div>
<div class="t" style="left:590.70px;top:508.00px;font-size:16.3px;line-height:16.3px;color:#151515;">06.02.2025</div>
<div class="t" style="left:715.50px;top:509.00px;font-size:16.69px;line-height:16.69px;color:#0000ee;"><span style="text-decoration:underline">Расходная накладная</span></div>
<div class="t" style="left:1017.80px;width:180px;text-align:right;top:508.00px;font-size:16.26px;line-height:16.26px;color:#151515;">78.00</div>
<div class="t" style="left:1215.60px;top:509.00px;font-size:16px;line-height:16px;color:#151515;letter-spacing:-0.180px;">Склад БИХ</div>
<div class="t" style="left:153.00px;top:544.00px;font-size:16px;line-height:16px;color:#151515;letter-spacing:-0.187px;">АВРОРА ООО</div>
<div class="t" style="left:466.00px;top:543.00px;font-size:16.32px;line-height:16.32px;color:#151515;">18</div>
<div class="t" style="left:590.70px;top:543.00px;font-size:16.3px;line-height:16.3px;color:#151515;">06.02.2025</div>
<div class="t" style="left:715.50px;top:544.00px;font-size:16.69px;line-height:16.69px;color:#0000ee;"><span style="text-decoration:underline">Расходная накладная</span></div>
<div class="t" style="left:1017.80px;width:180px;text-align:right;top:543.00px;font-size:16.35px;line-height:16.35px;color:#151515;">121.44</div>
<div class="t" style="left:1215.60px;top:543.00px;font-size:17.18px;line-height:17.18px;color:#151515;">Изолятор (карантинная зона)</div>
<div class="t" style="left:153.00px;top:579.00px;font-size:16px;line-height:16px;color:#151515;letter-spacing:-0.187px;">АВРОРА ООО</div>
<div class="t" style="left:466.00px;top:578.00px;font-size:16.32px;line-height:16.32px;color:#151515;">19</div>
<div class="t" style="left:590.70px;top:578.00px;font-size:16.3px;line-height:16.3px;color:#151515;">06.02.2025</div>
<div class="t" style="left:715.50px;top:579.00px;font-size:16.69px;line-height:16.69px;color:#0000ee;"><span style="text-decoration:underline">Расходная накладная</span></div>
<div class="t" style="left:1017.80px;width:180px;text-align:right;top:578.00px;font-size:16.32px;line-height:16.32px;color:#151515;">188 325.00</div>
<div class="t" style="left:1215.60px;top:579.00px;font-size:16px;line-height:16px;color:#151515;letter-spacing:-0.103px;">Склад ГП</div>
<div class="t" style="left:153.00px;top:614.00px;font-size:16px;line-height:16px;color:#151515;letter-spacing:-0.187px;">АВРОРА ООО</div>
<div class="t" style="left:466.00px;top:614.00px;font-size:16px;line-height:16px;color:#151515;letter-spacing:-0.234px;">777</div>
<div class="t" style="left:590.70px;top:613.00px;font-size:16.3px;line-height:16.3px;color:#151515;">10.02.2025</div>
<div class="t" style="left:715.50px;top:614.00px;font-size:16.69px;line-height:16.69px;color:#0000ee;"><span style="text-decoration:underline">Расходная накладная</span></div>
<div class="t" style="left:1017.80px;width:180px;text-align:right;top:613.00px;font-size:16.41px;line-height:16.41px;color:#151515;">5 592 000.00</div>
<div class="t" style="left:1215.60px;top:614.00px;font-size:16px;line-height:16px;color:#151515;letter-spacing:-0.180px;">Склад БИХ</div>
<div class="t" style="left:153.00px;top:649.00px;font-size:16px;line-height:16px;color:#151515;letter-spacing:-0.187px;">АВРОРА ООО</div>
<div class="t" style="left:466.00px;top:649.00px;font-size:16px;line-height:16px;color:#151515;letter-spacing:-0.234px;">777</div>
<div class="t" style="left:590.70px;top:648.00px;font-size:16.3px;line-height:16.3px;color:#151515;">10.02.2025</div>
<div class="t" style="left:715.50px;top:648.00px;font-size:17.25px;line-height:17.25px;color:#5c1a90;"><span style="text-decoration:underline">Приход денег по банку</span></div>
<div class="t" style="left:1017.80px;width:180px;text-align:right;top:648.00px;font-size:16.23px;line-height:16.23px;color:#151515;">90 000.00</div>
<div class="t" style="left:153.00px;top:684.00px;font-size:16px;line-height:16px;color:#151515;letter-spacing:-0.187px;">АВРОРА ООО</div>
<div class="t" style="left:466.00px;top:683.00px;font-size:16.32px;line-height:16.32px;color:#151515;">26</div>
<div class="t" style="left:590.70px;top:684.00px;font-size:16.55px;line-height:16.55px;color:#151515;">11.02.2025</div>
<div class="t" style="left:715.50px;top:684.00px;font-size:16.69px;line-height:16.69px;color:#0000ee;"><span style="text-decoration:underline">Расходная накладная</span></div>
<div class="t" style="left:1017.80px;width:180px;text-align:right;top:683.00px;font-size:16.22px;line-height:16.22px;color:#151515;">12.60</div>
<div class="t" style="left:1215.60px;top:684.00px;font-size:16px;line-height:16px;color:#151515;letter-spacing:-0.180px;">Склад БИХ</div>
<div class="t" style="left:153.00px;top:719.00px;font-size:16px;line-height:16px;color:#151515;letter-spacing:-0.187px;">АВРОРА ООО</div>
<div class="t" style="left:466.00px;top:718.00px;font-size:16.32px;line-height:16.32px;color:#151515;">24</div>
<div class="t" style="left:590.70px;top:719.00px;font-size:16.55px;line-height:16.55px;color:#151515;">11.02.2025</div>
<div class="t" style="left:715.50px;top:719.00px;font-size:16.69px;line-height:16.69px;color:#0000ee;"><span style="text-decoration:underline">Расходная накладная</span></div>
<div class="t" style="left:1017.80px;width:180px;text-align:right;top:718.00px;font-size:16.35px;line-height:16.35px;color:#151515;">904.80</div>
<div class="t" style="left:1215.60px;top:719.00px;font-size:16px;line-height:16px;color:#151515;letter-spacing:-0.180px;">Склад БИХ</div>
<div class="t" style="left:153.00px;top:754.00px;font-size:16px;line-height:16px;color:#151515;letter-spacing:-0.187px;">АВРОРА ООО</div>
<div class="t" style="left:466.00px;top:753.00px;font-size:16.32px;line-height:16.32px;color:#151515;">25</div>
<div class="t" style="left:590.70px;top:754.00px;font-size:16.55px;line-height:16.55px;color:#151515;">11.02.2025</div>
<div class="t" style="left:715.50px;top:754.00px;font-size:16.69px;line-height:16.69px;color:#0000ee;"><span style="text-decoration:underline">Расходная накладная</span></div>
<div class="t" style="left:1017.80px;width:180px;text-align:right;top:753.00px;font-size:16.22px;line-height:16.22px;color:#151515;">32.00</div>
<div class="t" style="left:1215.60px;top:754.00px;font-size:16px;line-height:16px;color:#151515;letter-spacing:-0.180px;">Склад БИХ</div>
<div class="t" style="left:153.00px;top:789.00px;font-size:16px;line-height:16px;color:#151515;letter-spacing:-0.187px;">АВРОРА ООО</div>
<div class="t" style="left:466.00px;top:788.00px;font-size:16.32px;line-height:16.32px;color:#151515;">7</div>
<div class="t" style="left:590.70px;top:789.00px;font-size:16.55px;line-height:16.55px;color:#151515;">11.02.2025</div>
<div class="t" style="left:715.50px;top:789.00px;font-size:16.88px;line-height:16.88px;color:#0000ee;"><span style="text-decoration:underline">Заявка от клиента</span></div>
</div>
<div class="r" style="left:684px;top:143px;width:990px;height:387px;background:#fff;border-radius:4px;box-shadow:0 3px 9px rgba(30,40,60,.38), 0 0 2px rgba(30,40,60,.25)"></div>
<div class="r" style="left:684px;top:143px;width:973px;height:32px;background:#f9f9fa;"></div>
<div class="r" style="left:684px;top:175px;width:973px;height:1px;background:#e3e4ec;"></div>
<div class="r" style="left:763px;top:143px;width:1px;height:347px;background:#e3e4ec;"></div>
<div class="r" style="left:1088px;top:143px;width:1px;height:347px;background:#e3e4ec;"></div>
<div class="r" style="left:1488px;top:143px;width:1px;height:347px;background:#e3e4ec;"></div>
<div class="r" style="left:1657px;top:143px;width:1px;height:347px;background:#e3e4ec;"></div>
<div class="r" style="left:684px;top:210px;width:973px;height:1px;background:#e3e4ec;"></div>
<div class="r" style="left:684px;top:245px;width:973px;height:1px;background:#e3e4ec;"></div>
<div class="r" style="left:684px;top:280px;width:973px;height:1px;background:#e3e4ec;"></div>
<div class="r" style="left:684px;top:315px;width:973px;height:1px;background:#e3e4ec;"></div>
<div class="r" style="left:684px;top:350px;width:973px;height:1px;background:#e3e4ec;"></div>
<div class="r" style="left:684px;top:385px;width:973px;height:1px;background:#e3e4ec;"></div>
<div class="r" style="left:684px;top:420px;width:973px;height:1px;background:#e3e4ec;"></div>
<div class="r" style="left:684px;top:455px;width:973px;height:1px;background:#e3e4ec;"></div>
<div class="r" style="left:684px;top:490px;width:973px;height:1px;background:#e3e4ec;"></div>
<div class="r" style="left:684px;top:421px;width:973px;height:34px;background:#d4d4d4;"></div>
<div class="r" style="left:763px;top:421px;width:1px;height:34px;background:#e4e4e4;"></div>
<div class="r" style="left:1088px;top:421px;width:1px;height:34px;background:#e4e4e4;"></div>
<div class="r" style="left:1488px;top:421px;width:1px;height:34px;background:#e4e4e4;"></div>
<div class="r" style="left:1657px;top:421px;width:1px;height:34px;background:#e4e4e4;"></div>
<div class="r" style="left:684px;top:490px;width:990px;height:2px;background:#dddee6;"></div>
<div class="r" style="left:684px;top:492px;width:990px;height:38px;background:#f9f9f9;border-radius:0 0 4px 4px"></div>
<div class="t" style="left:692.00px;top:153.00px;font-size:15.6px;line-height:15.6px;color:#737983;letter-spacing:0.659px;-webkit-text-stroke:0.45px currentColor;">Код</div>
<div class="t" style="left:772.40px;top:153.00px;font-size:15.6px;line-height:15.6px;color:#737983;letter-spacing:0.504px;-webkit-text-stroke:0.45px currentColor;">Наименование</div>
<div class="t" style="left:1088.24px;width:400px;text-align:center;top:153.00px;font-size:15.6px;line-height:15.6px;color:#737983;letter-spacing:0.487px;-webkit-text-stroke:0.45px currentColor;">Полное наименование</div>
<div class="t" style="left:1488.33px;width:169px;text-align:center;top:153.00px;font-size:15.6px;line-height:15.6px;color:#737983;letter-spacing:0.665px;-webkit-text-stroke:0.45px currentColor;">Тип</div>
<div class="t" style="left:693.40px;top:185.00px;font-size:16.36px;line-height:16.36px;color:#151515;">128914</div>
<div class="t" style="left:773.00px;top:185.00px;font-size:16.05px;line-height:16.05px;color:#151515;">A2134</div>
<div class="t" style="left:1098.30px;top:185.00px;font-size:16.05px;line-height:16.05px;color:#151515;">A2134</div>
<div class="t" style="left:1498.30px;top:185.00px;font-size:17.35px;line-height:17.35px;color:#151515;">Контрагент</div>
<div class="t" style="left:693.40px;top:220.00px;font-size:16.32px;line-height:16.32px;color:#151515;">95149</div>
<div class="t" style="left:773.00px;top:221.00px;font-size:16px;line-height:16px;color:#151515;letter-spacing:-0.191px;">MEGA TEAM TECH LTD QINGDAO XINY...</div>
<div class="t" style="left:1098.30px;top:221.00px;font-size:16px;line-height:16px;color:#151515;letter-spacing:-0.195px;">"MEGA TEAM TECH LTD QINGDAO XINYATAI STAI...</div>
<div class="t" style="left:1498.30px;top:220.00px;font-size:17.35px;line-height:17.35px;color:#151515;">Контрагент</div>
<div class="t" style="left:693.40px;top:255.00px;font-size:16.32px;line-height:16.32px;color:#151515;">96746</div>
<div class="t" style="left:773.00px;top:256.00px;font-size:16px;line-height:16px;color:#151515;letter-spacing:-0.293px;">NINGBO BOA STEEL LTD INDUSTRIAL Z...</div>
<div class="t" style="left:1098.30px;top:256.00px;font-size:16px;line-height:16px;color:#151515;letter-spacing:-0.249px;">NINGBO BOA STEEL LTD INDUSTRIAL ZONE HUA...</div>
<div class="t" style="left:1498.30px;top:255.00px;font-size:17.35px;line-height:17.35px;color:#151515;">Контрагент</div>
<div class="t" style="left:693.40px;top:290.00px;font-size:16.32px;line-height:16.32px;color:#151515;">97016</div>
<div class="t" style="left:773.00px;top:291.00px;font-size:16px;line-height:16px;color:#151515;letter-spacing:-0.444px;">QINGDAO XINYATAI STANLESS STEEL C...</div>
<div class="t" style="left:1098.30px;top:291.00px;font-size:16px;line-height:16px;color:#151515;letter-spacing:-0.338px;">"QINGDAO XINYATAI STANLESS STEEL CO.LTD"</div>
<div class="t" style="left:1498.30px;top:290.00px;font-size:17.35px;line-height:17.35px;color:#151515;">Контрагент</div>
<div class="t" style="left:693.40px;top:325.00px;font-size:16.32px;line-height:16.32px;color:#151515;">96665</div>
<div class="t" style="left:773.00px;top:326.00px;font-size:16px;line-height:16px;color:#151515;letter-spacing:-0.642px;">THREEWAY STEEL CO.LTD</div>
<div class="t" style="left:1098.30px;top:326.00px;font-size:16px;line-height:16px;color:#151515;letter-spacing:-0.532px;">"THREEWAY STEEL CO.LTD"</div>
<div class="t" style="left:1498.30px;top:325.00px;font-size:17.35px;line-height:17.35px;color:#151515;">Контрагент</div>
<div class="t" style="left:693.40px;top:360.00px;font-size:16.32px;line-height:16.32px;color:#151515;">88056</div>
<div class="t" style="left:773.00px;top:360.00px;font-size:17.04px;line-height:17.04px;color:#151515;">Абдрахманов Ильмир Хабирьянови...</div>
<div class="t" style="left:1098.30px;top:360.00px;font-size:17.15px;line-height:17.15px;color:#151515;">Индивидуальный предприниматель Абдрахм...</div>
<div class="t" style="left:1498.30px;top:360.00px;font-size:17.35px;line-height:17.35px;color:#151515;">Контрагент</div>
<div class="t" style="left:693.40px;top:395.00px;font-size:16.32px;line-height:16.32px;color:#151515;">66226</div>
<div class="t" style="left:773.00px;top:396.00px;font-size:16.75px;line-height:16.75px;color:#151515;">Авзалова Тамара Гивиевна ИП</div>
<div class="t" style="left:1098.30px;top:395.00px;font-size:17.14px;line-height:17.14px;color:#151515;">Индивидуальный предприниматель Авзалова...</div>
<div class="t" style="left:1498.30px;top:395.00px;font-size:17.35px;line-height:17.35px;color:#151515;">Контрагент</div>
<div class="t" style="left:693.40px;top:430.00px;font-size:16.32px;line-height:16.32px;color:#151515;">66098</div>
<div class="t" style="left:773.00px;top:431.00px;font-size:16px;line-height:16px;color:#151515;letter-spacing:-0.187px;">АВРОРА ООО</div>
<div class="t" style="left:1098.30px;top:431.00px;font-size:16px;line-height:16px;color:#151515;letter-spacing:-0.238px;">ОБЩЕСТВО С ОГРАНИЧЕННОЙ ОТВЕТСТВЕНН...</div>
<div class="t" style="left:1498.30px;top:430.00px;font-size:17.35px;line-height:17.35px;color:#151515;">Контрагент</div>
<div class="t" style="left:693.40px;top:465.00px;font-size:16.32px;line-height:16.32px;color:#151515;">92420</div>
<div class="t" style="left:773.00px;top:466.00px;font-size:16px;line-height:16px;color:#151515;letter-spacing:-0.384px;">АВТОБУССЕРВИС ООО</div>
<div class="t" style="left:1098.30px;top:466.00px;font-size:16px;line-height:16px;color:#151515;letter-spacing:-0.238px;">ОБЩЕСТВО С ОГРАНИЧЕННОЙ ОТВЕТСТВЕНН...</div>
<div class="t" style="left:1498.30px;top:465.00px;font-size:17.35px;line-height:17.35px;color:#151515;">Контрагент</div>
<div class="r" style="left:1660px;top:147px;width:10px;height:34px;background:#9ea1aa;border-radius:5px"></div>
<div class="t" style="left:1102.70px;top:503.00px;font-size:17.36px;line-height:17.36px;color:#4d525c;">Загрузить еще 100</div>
<div class="r" style="left:683px;top:108px;width:609px;height:35px;background:#fff;border:1.5px solid #45b06a;border-radius:5px;box-shadow:inset 0 -5px 6px -3px rgba(40,60,120,.16), inset 0 3px 4px -3px rgba(40,60,120,.12)"></div>
<div class="r" style="left:764px;top:110px;width:1px;height:31px;background:#e1e3ea;"></div>
<div class="t" style="left:689.30px;top:117.00px;font-size:16.3px;line-height:16.3px;color:#151515;">66098</div>
<div class="t" style="left:770.70px;top:118.00px;font-size:16px;line-height:16px;color:#151515;letter-spacing:-0.187px;">АВРОРА ООО</div>
<div class="r" style="left:875px;top:114px;width:1.3px;height:22px;background:#111;"></div>
<svg class="ic" style="left:1232px;top:118.7px" width="14" height="13" viewBox="0 0 14 13"><path d="M2.3 1.8L11.8 11.3M11.8 1.8L2.3 11.3" stroke="#66696f" stroke-width="2.5"/></svg>
<svg class="ic" style="left:1266px;top:120px" width="16" height="10" viewBox="0 0 16 10"><polyline points="2,2 7.9,7.9 13.8,2" fill="none" stroke="#1f9a48" stroke-width="2.8"/></svg>
<div class="r" style="left:521px;top:97px;width:786px;height:56px;background:transparent;border:5px solid #ec1c24"></div>
</body></html>
